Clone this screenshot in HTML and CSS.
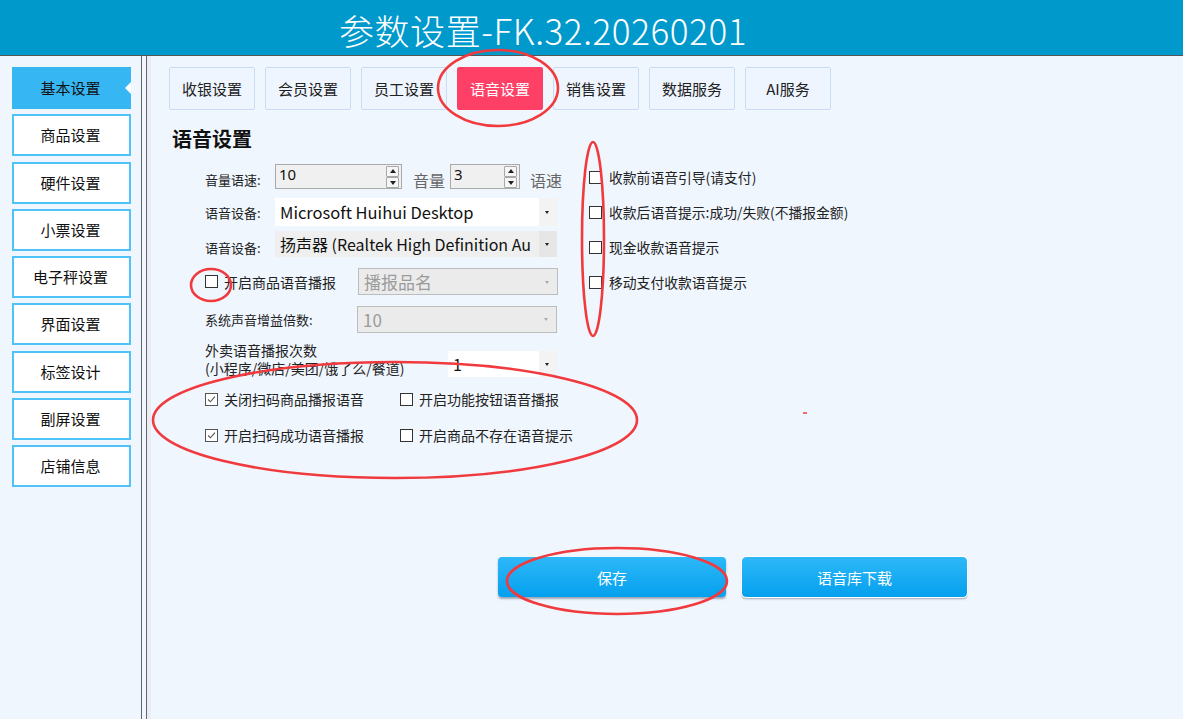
FILE: index.html
```html
<!DOCTYPE html>
<html lang="zh-CN">
<head>
  <meta charset="UTF-8">
  <title>参数设置</title>
  <link rel="stylesheet" href="styles.css">
</head>
<body>
  <div class="titlebar">参数设置-FK.32.20260201</div>

  <div class="layout">
    <nav class="sidebar">
      <div class="nav-item active">基本设置</div>
      <div class="nav-item">商品设置</div>
      <div class="nav-item">硬件设置</div>
      <div class="nav-item">小票设置</div>
      <div class="nav-item">电子秤设置</div>
      <div class="nav-item">界面设置</div>
      <div class="nav-item">标签设计</div>
      <div class="nav-item">副屏设置</div>
      <div class="nav-item">店铺信息</div>
    </nav>
    <div class="divider"></div>

    <main class="main">
      <div class="tabs">
        <div class="tab">收银设置</div>
        <div class="tab">会员设置</div>
        <div class="tab">员工设置</div>
        <div class="tab active">语音设置</div>
        <div class="tab">销售设置</div>
        <div class="tab">数据服务</div>
        <div class="tab">AI服务</div>
      </div>

      <h2 class="section-title">语音设置</h2>

      <div class="form">
        <div class="form-left">
          <div class="row row-speed">
            <span class="label">音量语速:</span>
            <div class="spin spin-wide">
              <span class="spin-val">10</span>
              <span class="spin-btns"><i class="spin-up"></i><i class="spin-down"></i></span>
            </div>
            <span class="unit unit-vol">音量</span>
            <div class="spin spin-narrow">
              <span class="spin-val">3</span>
              <span class="spin-btns"><i class="spin-up"></i><i class="spin-down"></i></span>
            </div>
            <span class="unit unit-rate">语速</span>
          </div>

          <div class="row row-device1">
            <span class="label">语音设备:</span>
            <div class="combo combo-white combo-long">
              <span class="combo-text">Microsoft Huihui Desktop</span>
              <span class="combo-arrow"></span>
            </div>
          </div>

          <div class="row row-device2">
            <span class="label">语音设备:</span>
            <div class="combo combo-gray combo-long">
              <span class="combo-text">扬声器 (Realtek High Definition Au</span>
              <span class="combo-arrow"></span>
            </div>
          </div>

          <div class="row row-goods">
            <label class="check"><span class="cb"></span><span class="check-text">开启商品语音播报</span></label>
            <div class="combo combo-disabled combo-mid">
              <span class="combo-text">播报品名</span>
              <span class="combo-arrow"></span>
            </div>
          </div>

          <div class="row row-gain">
            <span class="label">系统声音增益倍数:</span>
            <div class="combo combo-disabled combo-mid">
              <span class="combo-text">10</span>
              <span class="combo-arrow"></span>
            </div>
          </div>

          <div class="row row-takeout">
            <span class="label label-2line">外卖语音播报次数<br>(小程序/微店/美团/饿了么/餐道)</span>
            <div class="combo combo-white combo-short">
              <span class="combo-text">1</span>
              <span class="combo-arrow"></span>
            </div>
          </div>

          <div class="check-grid">
            <label class="check"><span class="cb checked"><svg viewBox="0 0 13 13"><path d="M2.5 6.5 L5.2 9.2 L10.5 3.2" fill="none" stroke="#555" stroke-width="1.3"/></svg></span><span class="check-text">关闭扫码商品播报语音</span></label>
            <label class="check"><span class="cb"></span><span class="check-text">开启功能按钮语音播报</span></label>
            <label class="check"><span class="cb checked"><svg viewBox="0 0 13 13"><path d="M2.5 6.5 L5.2 9.2 L10.5 3.2" fill="none" stroke="#555" stroke-width="1.3"/></svg></span><span class="check-text">开启扫码成功语音播报</span></label>
            <label class="check"><span class="cb"></span><span class="check-text">开启商品不存在语音提示</span></label>
          </div>
        </div>

        <div class="form-right">
          <label class="check"><span class="cb"></span><span class="check-text">收款前语音引导(请支付)</span></label>
          <label class="check"><span class="cb"></span><span class="check-text">收款后语音提示:成功/失败(不播报金额)</span></label>
          <label class="check"><span class="cb"></span><span class="check-text">现金收款语音提示</span></label>
          <label class="check"><span class="cb"></span><span class="check-text">移动支付收款语音提示</span></label>
        </div>
      </div>

      <div class="actions">
        <button class="btn btn-save">保存</button>
        <button class="btn btn-download">语音库下载</button>
      </div>
    </main>
  </div>

  <!-- 红色标注圈 -->
  <svg class="marks" width="1183" height="719" viewBox="0 0 1183 719">
    <g fill="none" stroke="#f03a3e" stroke-width="2.6">
      <ellipse cx="498" cy="88" rx="60" ry="38"/>
      <ellipse cx="593" cy="239" rx="11" ry="97"/>
      <ellipse cx="211" cy="285" rx="20" ry="16"/>
      <ellipse cx="395" cy="420" rx="242" ry="58"/>
      <ellipse cx="617" cy="581" rx="110" ry="33"/>
      <line x1="803" y1="413" x2="807" y2="413" stroke-width="1.5"/>
    </g>
  </svg>
</body>
</html>
```

FILE: styles.css
```css
/* 基础 */
* {
  margin: 0;
  padding: 0;
  box-sizing: border-box;
}

body {
  width: 1183px;
  height: 719px;
  overflow: hidden;
  position: relative;
  font-family: "Noto Sans CJK SC", "Noto Sans", sans-serif;
  color: #222;
  background-color: #f0f6fe;
}

/* 标题栏 */
.titlebar {
  height: 56px;
  padding-top: 7px;
  padding-right: 97px;
  line-height: 46px;
  font-size: 35px;
  font-weight: 300;
  letter-spacing: 0.6px;
  color: #fff;
  text-align: center;
  background-color: #0099cc;
  border-bottom: 1px solid #555;
}

.layout {
  display: flex;
  height: 663px;
}

/* 左侧菜单 */
.sidebar {
  width: 142px;
  padding: 11px 0 0 12px;
  border-right: 1px solid #666;
  display: flex;
  flex-direction: column;
  gap: 5.3px;
}

.nav-item {
  position: relative;
  width: 119px;
  height: 42px;
  padding-right: 2px;
  line-height: 38px;
  text-align: center;
  font-size: 15px;
  color: #111;
  background-color: #fff;
  border: 2px solid #4fc3f7;
}

.nav-item.active {
  background-color: #37b6f4;
  border-color: #37b6f4;
}

.nav-item.active::after {
  content: "";
  position: absolute;
  right: -2px;
  top: 13px;
  border-style: solid;
  border-width: 6px 6px 6px 0;
  border-color: transparent #fff transparent transparent;
}

.divider {
  width: 5px;
  border-right: 1px solid #666;
}

/* 主区域 */
.main {
  flex: 1;
  padding: 11px 0 0 18px;
  border-left: 4px solid #e9edf3;
}

.tabs {
  display: flex;
  gap: 10px;
}

.tab {
  width: 86px;
  height: 43px;
  line-height: 41px;
  text-align: center;
  font-size: 15px;
  color: #222;
  background-color: #eef5fe;
  border: 1px solid #c8dcf4;
  border-radius: 2px;
}

.tab.active {
  color: #fff;
  background-color: #ff4066;
  border-color: #ff4066;
}

.section-title {
  margin: 17px 0 0 3px;
  font-size: 20px;
  line-height: 24px;
  font-weight: bold;
  color: #111;
}

/* 表单 */
.form {
  display: flex;
  margin-top: 13px;
}

.form-left {
  width: 406px;
  padding-left: 36px;
}

.row {
  display: flex;
  align-items: center;
}

.label {
  font-size: 13px;
  color: #222;
  white-space: nowrap;
}

.row-speed {
  height: 25px;
}

.row-speed .label,
.row-speed .unit {
  padding-top: 6px;
}

.row-speed .label {
  width: 70px;
}

.row-device1 {
  height: 28px;
  margin-top: 9px;
}

.row-device2 {
  height: 26px;
  margin-top: 5px;
}

.row-device1 .label,
.row-device2 .label {
  width: 70px;
}

.row-device2 .label {
  padding-top: 7px;
}

.row-goods {
  height: 27px;
  margin-top: 11px;
}

.row-goods .check {
  width: 153px;
}

.row-gain {
  height: 26px;
  margin-top: 11px;
}

.row-gain .label {
  width: 152px;
}

.row-takeout {
  height: 38px;
  margin-top: 9px;
  align-items: flex-start;
}

.label-2line {
  width: 243px;
  font-size: 14px;
  line-height: 18px;
  margin-top: 0;
}

.row-takeout .combo {
  margin-top: 10px;
}

.unit {
  font-size: 16px;
  color: #666;
}

.unit-vol {
  margin: 0 5px 0 11px;
}

.unit-rate {
  margin-left: 10px;
}

/* 数字框 */
.spin {
  position: relative;
  height: 25px;
  background-color: #f0f0f0;
  border: 1px solid #a9a9a9;
}

.spin-wide {
  width: 127px;
}

.spin-narrow {
  width: 70px;
}

.spin-val {
  position: absolute;
  left: 3px;
  top: -1px;
  font-family: "Noto Sans", sans-serif;
  font-size: 15px;
  line-height: 20px;
  color: #111;
}

.spin-btns {
  position: absolute;
  right: 2px;
  top: 1px;
  display: flex;
  flex-direction: column;
  gap: 0;
}

.spin-btns i {
  position: relative;
  display: block;
  width: 13px;
  height: 11px;
  background-color: #f6f6f6;
  border: 1px solid #a8a8a8;
  border-radius: 1px;
}

.spin-btns i::after {
  content: "";
  position: absolute;
  left: 3px;
  border-style: solid;
}

.spin-up::after {
  top: 2px;
  border-width: 0 3px 4px 3px;
  border-color: transparent transparent #222 transparent;
}

.spin-down::after {
  top: 3px;
  border-width: 4px 3px 0 3px;
  border-color: #222 transparent transparent transparent;
}

/* 下拉框 */
.combo {
  position: relative;
  display: flex;
  align-items: center;
  overflow: hidden;
}

.combo-long {
  width: 282px;
}

.combo-mid {
  width: 200px;
}

.combo-short {
  width: 109px;
}

.combo-white {
  height: 28px;
  background-color: #fff;
}

.row-takeout .combo-white {
  height: 26px;
}

.combo-gray {
  height: 26px;
  background-color: #efefef;
}

.combo-disabled {
  height: 27px;
  background-color: #ebebeb;
  border: 1px solid #bdbdbd;
}

.combo-text {
  flex: 1;
  padding-left: 5px;
  font-size: 16px;
  white-space: nowrap;
  color: #111;
}

.combo-long .combo-text {
  font-size: 16.5px;
}

.combo-gray .combo-text {
  font-size: 16px;
}

.combo-disabled .combo-text {
  color: #9b9b9b;
  font-size: 17px;
}

.combo-arrow {
  position: relative;
  width: 18px;
  height: 100%;
  flex-shrink: 0;
  background-color: #f3f3f3;
}

.combo-gray .combo-arrow {
  background-color: #e6e6e6;
}

.combo-disabled .combo-arrow {
  background-color: transparent;
}

.combo-arrow::after {
  content: "";
  position: absolute;
  left: 6px;
  top: 50%;
  margin-top: -1px;
  border-style: solid;
  border-width: 3px 2.5px 0 2.5px;
  border-color: #222 transparent transparent transparent;
}

.combo-disabled .combo-arrow::after {
  border-color: #aaa transparent transparent transparent;
}

/* 复选框 */
.check {
  display: flex;
  align-items: center;
  font-size: 14px;
  color: #222;
  white-space: nowrap;
}

.cb {
  width: 13px;
  height: 13px;
  margin-right: 6px;
  background-color: #fff;
  border: 1px solid #333;
  flex-shrink: 0;
}

.cb.checked {
  border-color: #555;
}

.cb svg {
  display: block;
  width: 11px;
  height: 11px;
}

.check-grid {
  display: grid;
  grid-template-columns: 195px auto;
  row-gap: 18px;
  margin-top: 11px;
}

.check-grid .check {
  height: 18px;
}

.form-right {
  display: flex;
  flex-direction: column;
  gap: 17px;
  margin-left: 14px;
  padding-top: 4px;
}

.form-right .check {
  height: 18px;
  font-size: 13.8px;
}

.form-right .cb {
  margin-right: 7px;
}

/* 底部按钮 */
.actions {
  display: flex;
  gap: 16px;
  margin: 113px 0 0 329px;
}

.btn {
  height: 40px;
  font-family: "Noto Sans CJK SC", sans-serif;
  font-size: 15px;
  color: #fff;
  border: none;
  border-radius: 4px;
  background: linear-gradient(#2eb8f8, #04a0ee);
  box-shadow: 0 2px 2px rgba(60, 70, 90, 0.45);
}

.btn-save {
  width: 228px;
}

.btn-download {
  width: 225px;
  outline: 1px solid #fff;
}

/* 标注 */
.marks {
  position: absolute;
  left: 0;
  top: 0;
  pointer-events: none;
}
```
